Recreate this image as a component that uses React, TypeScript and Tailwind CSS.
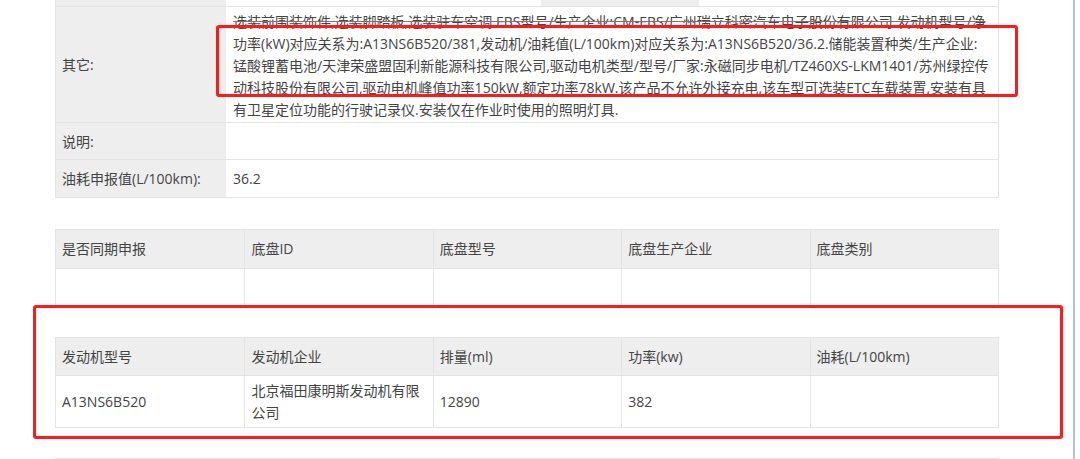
import React from "react";

const line = "whitespace-nowrap h-[22px] leading-[22px]";

function Grid5({ cells, header, h, wrap }: { cells: string[]; header?: boolean; h: string; wrap?: boolean }) {
  return (
    <div className={`grid grid-cols-5 ${h} ${header ? "bg-[#eeeeee]" : "bg-white"} border-b border-[#e4e4e4]`}>
      {cells.map((c, i) => (
        <div
          key={i}
          className={`flex items-center px-[6px] leading-[22px] ${i > 0 ? "border-l border-[#e4e4e4]" : ""}`}
        >
          {c}
        </div>
      ))}
    </div>
  );
}

export default function App() {
  return (
    <div className="relative w-[1080px] h-[459px] overflow-hidden bg-white font-['Open_Sans','Noto_Sans_CJK_SC',sans-serif] text-[14px] text-[#444]">
      <div className="flex h-full">
        <div className="w-[1073px] pl-[55px]">
          <div className="w-[944px]">
            {/* top table */}
            <div className="border-r border-l border-b border-[#e4e4e4]">
              <div className="flex h-[7px] border-b border-[#e4e4e4]">
                <div className="w-[170px] bg-[#eeeeee]" />
                <div className="w-[315px] bg-white" />
                <div className="w-[158px] bg-[#eeeeee]" />
                <div className="flex-1 bg-white" />
              </div>
              <div className="flex h-[116px] border-b border-[#e4e4e4]">
                <div className="w-[170px] bg-[#eeeeee] flex items-center px-[6px]">其它:</div>
                <div className="flex-1 pl-[7px] pt-[4px] text-[#444]">
                  <div className={`${line} line-through decoration-[#777]`}>
                    选装前围装饰件,选装脚踏板,选装驻车空调.EBS型号/生产企业:CM-EBS/广州瑞立科密汽车电子股份有限公司.发动机型号/净
                  </div>
                  <div className={line}>
                    功率(kW)对应关系为:A13NS6B520/381,发动机/油耗值(L/100km)对应关系为:A13NS6B520/36.2.储能装置种类/生产企业:
                  </div>
                  <div className={line}>
                    锰酸锂蓄电池/天津荣盛盟固利新能源科技有限公司,驱动电机类型/型号/厂家:永磁同步电机/TZ460XS-LKM1401/苏州绿控传
                  </div>
                  <div className={line}>
                    动科技股份有限公司,驱动电机峰值功率150kW,额定功率78kW.该产品不允许外接充电,该车型可选装ETC车载装置,安装有具
                  </div>
                  <div className={line}>有卫星定位功能的行驶记录仪.安装仅在作业时使用的照明灯具.</div>
                </div>
              </div>
              <div className="flex h-[37px] border-b border-[#e4e4e4]">
                <div className="w-[170px] bg-[#eeeeee] flex items-center px-[6px]">说明:</div>
                <div className="flex-1" />
              </div>
              <div className="flex h-[37px]">
                <div className="w-[170px] bg-[#eeeeee] flex items-center px-[6px]">油耗申报值(L/100km):</div>
                <div className="flex-1 flex items-center pl-[7px]">36.2</div>
              </div>
            </div>

            {/* chassis table */}
            <div className="mt-[31px] border-t border-l border-r border-[#e4e4e4]">
              <Grid5 header h="h-[39px]" cells={["是否同期申报", "底盘ID", "底盘型号", "底盘生产企业", "底盘类别"]} />
              <Grid5 h="h-[38px]" cells={["", "", "", "", ""]} />
            </div>

            {/* engine table */}
            <div className="mt-[30px] border-t border-l border-r border-[#e4e4e4]">
              <Grid5 header h="h-[38px]" cells={["发动机型号", "发动机企业", "排量(ml)", "功率(kw)", "油耗(L/100km)"]} />
              <Grid5
                h="h-[52px]"
                cells={["A13NS6B520", "北京福田康明斯发动机有限公司", "12890", "382", ""]}
              />
            </div>

            {/* next table (cut off) */}
            <div className="mt-[30px] flex h-[10px] border-t border-l border-r border-[#e4e4e4]">
              <div className="w-[142px] bg-[#eeeeee]" />
              <div className="flex-1 bg-white" />
            </div>
          </div>
        </div>
        <div className="w-[2px] bg-[#a8c6ec]" />
        <div className="flex-1 bg-white" />
      </div>

      {/* red annotation boxes */}
      <div className="absolute left-[216px] top-[25px] w-[802px] h-[72px] border-[3px] border-[#ff1a1a] rounded-[3px]" />
      <div className="absolute left-[33px] top-[305px] w-[1030px] h-[134px] border-[3px] border-[#ff1a1a] rounded-[3px]" />
    </div>
  );
}
